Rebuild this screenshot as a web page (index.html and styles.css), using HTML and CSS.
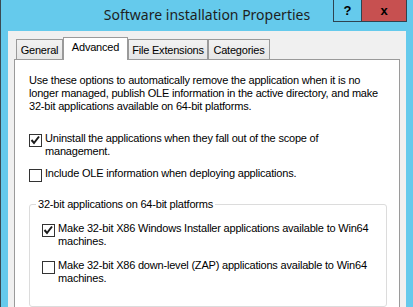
FILE: index.html
```html
<!DOCTYPE html>
<html lang="en">
<head>
    <meta charset="UTF-8">
    <title>Software installation Properties</title>
    <link rel="stylesheet" href="styles.css">
</head>
<body>

    <div class="window">
        <div class="titlebar">
            <div></div>
            <div class="title">Software installation Properties</div>
            <div class="controls">
                <span class="btn help">?</span>
                <span class="btn close">x</span>
            </div>
        </div>

        <div class="client">
            <div class="tabs">
                <div class="tab tab-general">General</div>
                <div class="tab tab-advanced active">Advanced</div>
                <div class="tab tab-ext">File Extensions</div>
                <div class="tab tab-cat">Categories</div>
            </div>

            <div class="panel">
                <p class="intro">Use these options to automatically remove the application when it is no<br>longer managed, publish OLE information in the active directory, and make<br>32-bit applications available on 64-bit platforms.</p>

                <label class="check first">
                    <span class="box"><svg width="11" height="11" viewBox="0 0 11 11"><polyline points="1.5,5 4,8 9,1.5" fill="none" stroke="#1a1a1a" stroke-width="2"/></svg></span>
                    <span class="text">Uninstall the applications when they fall out of the scope of<br>management.</span>
                </label>
                <label class="check">
                    <span class="box"></span>
                    <span class="text">Include OLE information when deploying applications.</span>
                </label>

                <fieldset class="group">
                    <legend>32-bit applications on 64-bit platforms</legend>
                    <label class="check inner">
                        <span class="box"><svg width="11" height="11" viewBox="0 0 11 11"><polyline points="1.5,5 4,8 9,1.5" fill="none" stroke="#1a1a1a" stroke-width="2"/></svg></span>
                        <span class="text">Make 32-bit X86 Windows Installer applications available to Win64<br>machines.</span>
                    </label>
                    <label class="check">
                        <span class="box"></span>
                        <span class="text">Make 32-bit X86 down-level (ZAP) applications available to Win64<br>machines.</span>
                    </label>
                </fieldset>
            </div>
        </div>
    </div>

</body>
</html>
```

FILE: styles.css
```css
body {
    margin: 0;
    font-family: "Liberation Sans", Arial, sans-serif;
    font-size: 11px;
    letter-spacing: -0.2px;
    color: #000;
}
.window {
    width: 413px;
    height: 307px;
    box-sizing: border-box;
    background: #65caec;
    border-left: 1px solid #3a4a52;
    display: flex;
    flex-direction: column;
    overflow: hidden;
}
.titlebar {
    height: 31px;
    display: grid;
    grid-template-columns: 1fr auto 1fr;
    flex: none;
}
.title {
    font-family: "Noto Sans", sans-serif;
    font-size: 14px;
    letter-spacing: 0;
    line-height: 29px;
    color: #1e1e1e;
    white-space: nowrap;
}
.controls {
    justify-self: end;
    display: flex;
    margin-right: 6px;
}
.btn {
    box-sizing: border-box;
    height: 22px;
    border: 1px solid #2e4350;
    border-top: none;
    text-align: center;
    font-weight: bold;
    font-size: 13px;
    letter-spacing: 0;
    line-height: 21px;
    color: #000;
}
.help {
    width: 29px;
}
.close {
    width: 45px;
    border-left: none;
    background: #c75050;
}
.client {
    flex: 1;
    margin: 0 7px;
    padding: 6px 6px 0;
    background: #f0f0f0;
    display: flex;
    flex-direction: column;
}
.tabs {
    display: flex;
    align-items: flex-end;
    height: 22px;
    padding-left: 2px;
    flex: none;
}
.tab {
    box-sizing: border-box;
    height: 20px;
    padding-top: 1px;
    line-height: 18px;
    text-align: center;
    white-space: nowrap;
    border: 1px solid #9a9a9a;
    border-bottom: none;
    background: linear-gradient(#f2f2f2, #e6e6e6);
}
.tab-general { width: 47px; }
.tab-advanced { width: 65px; }
.tab-ext { width: 80px; }
.tab-cat { width: 62px; }
.tab.active {
    height: 23px;
    padding-top: 0;
    line-height: 19px;
    margin-bottom: -1px;
    background: #fff;
    position: relative;
    z-index: 1;
}
.panel {
    flex: 1;
    background: #fff;
    border: 1px solid #9a9a9a;
    padding: 14px 12px 0 14px;
}
.intro {
    margin: 0;
    line-height: 13px;
    white-space: nowrap;
}
.check {
    display: flex;
    gap: 3px;
    line-height: 13px;
    margin-top: 9px;
}
.check .text {
    white-space: nowrap;
}
.check.first {
    margin-top: 19px;
}
.check.inner {
    margin-top: 0;
}
.group .check + .check {
    margin-top: 11px;
}
.box {
    flex: none;
    box-sizing: border-box;
    width: 13px;
    height: 13px;
    margin-top: 2px;
    border: 1px solid #333;
    background: #fff;
}
.box svg {
    display: block;
}
.group {
    margin: 16px 0 0;
    padding: 11px 12px 21px;
    border: 1px solid #dcdcdc;
    border-radius: 3px;
}
.group legend {
    padding: 0 2px;
    margin-left: -6px;
    line-height: 13px;
    white-space: nowrap;
}
```
